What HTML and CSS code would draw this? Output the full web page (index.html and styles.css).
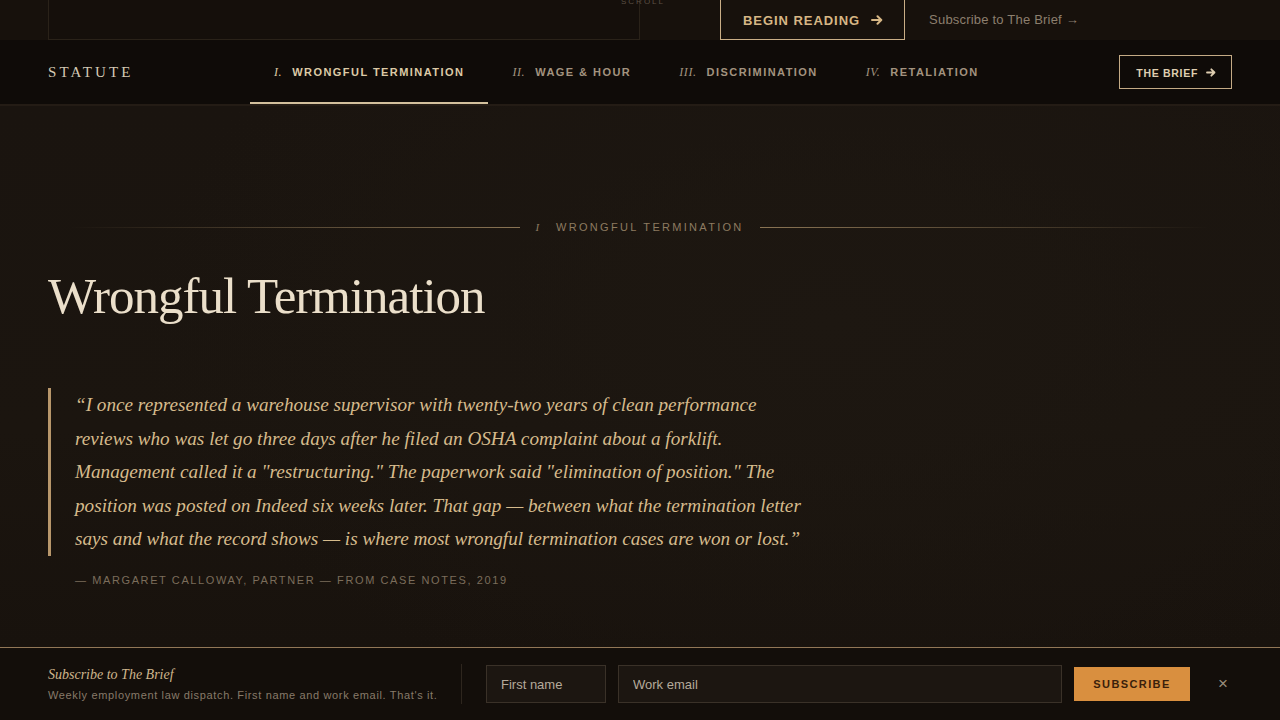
FILE: index.html
```html
<!DOCTYPE html>
<html lang="en">
<head>
<meta charset="utf-8">
<title>Statute</title>
<link rel="stylesheet" href="styles.css">
</head>
<body>
<div class="hero-tail">
  <div class="hero-box">
    <span class="scroll-cue">SCROLL</span>
  </div>
  <div class="hero-actions">
    <a class="btn-outline" href="#">BEGIN READING <svg class="arr" width="12" height="10" viewBox="0 0 12 10"><path d="M1 5h9M6.5 1.2 10.3 5 6.5 8.8" fill="none" stroke="currentColor" stroke-width="2" stroke-linecap="round" stroke-linejoin="round"/></svg></a>
    <a class="hero-link" href="#">Subscribe to The Brief &rarr;</a>
  </div>
</div>

<nav class="topnav">
  <div class="brand">STATUTE</div>
  <ul class="navlist">
    <li class="navitem active"><span class="num">I.</span>WRONGFUL TERMINATION</li>
    <li class="navitem"><span class="num">II.</span>WAGE &amp; HOUR</li>
    <li class="navitem"><span class="num">III.</span>DISCRIMINATION</li>
    <li class="navitem"><span class="num">IV.</span>RETALIATION</li>
  </ul>
  <a class="btn-brief" href="#">THE BRIEF <svg class="arr" width="10" height="9" viewBox="0 0 10 9"><path d="M1 4.5h7.5M5.3 1.3 8.5 4.5 5.3 7.7" fill="none" stroke="currentColor" stroke-width="1.8" stroke-linecap="round" stroke-linejoin="round"/></svg></a>
</nav>

<main class="main">
  <div class="section-label">
    <span class="rule rule-left"></span>
    <span class="label-num">I</span>
    <span class="label-text">WRONGFUL TERMINATION</span>
    <span class="rule rule-right"></span>
  </div>
  <h1 class="title">Wrongful Termination</h1>
  <blockquote class="quote">&ldquo;I once represented a warehouse supervisor with twenty-two years of clean performance reviews who was let go three days after he filed an OSHA complaint about a forklift. Management called it a "restructuring." The paperwork said "elimination of position." The position was posted on Indeed six weeks later. That gap &mdash; between what the termination letter says and what the record shows &mdash; is where most wrongful termination cases are won or lost.&rdquo;</blockquote>
  <p class="cite">&mdash; MARGARET CALLOWAY, PARTNER &mdash; FROM CASE NOTES, 2019</p>
</main>

<footer class="subbar">
  <div class="sub-copy">
    <div class="sub-title">Subscribe to The Brief</div>
    <div class="sub-desc">Weekly employment law dispatch. First name and work email. That's it.</div>
  </div>
  <div class="sub-divider"></div>
  <form class="sub-form">
    <input class="field field-name" type="text" placeholder="First name">
    <input class="field field-email" type="email" placeholder="Work email">
    <button class="btn-sub" type="button">SUBSCRIBE</button>
  </form>
  <button class="sub-close" type="button">&times;</button>
</footer>
</body>
</html>
```

FILE: styles.css
```css
* { box-sizing: border-box; }
html, body { margin: 0; padding: 0; }
body {
  width: 1280px;
  height: 720px;
  overflow: hidden;
  background: #18120d;
  font-family: "Liberation Sans", Arial, sans-serif;
  display: flex;
  flex-direction: column;
}
a { text-decoration: none; }

.hero-tail {
  height: 40px;
  background: #17110c;
  display: flex;
  align-items: flex-end;
  padding-left: 48px;
  overflow: hidden;
  flex-shrink: 0;
}
.hero-box {
  width: 592px;
  height: 80px;
  border: 1px solid #2a2219;
  border-top: none;
  position: relative;
  background: #150f0b;
}
.scroll-cue {
  position: absolute;
  right: -26px;
  top: 37px;
  font-size: 8px;
  letter-spacing: 2px;
  color: #5b5044;
}
.hero-actions {
  display: flex;
  align-items: flex-end;
  margin-left: 80px;
  gap: 24px;
}
.btn-outline {
  display: flex;
  align-items: center;
  gap: 11px;
  height: 42px;
  padding: 2px 21px 0 22px;
  border: 1px solid #c9ae86;
  color: #d6b685;
  font-weight: bold;
  font-size: 13px;
  letter-spacing: 0.95px;
}
.hero-link {
  color: #8c7f6e;
  font-size: 13px;
  letter-spacing: 0.2px;
  line-height: 40px;
}

.topnav {
  height: 66px;
  background: #0f0b08;
  border-bottom: 2px solid #241c15;
  display: flex;
  align-items: center;
  padding: 0 48px;
  flex-shrink: 0;
}
.brand {
  font-family: "Liberation Serif", "Times New Roman", serif;
  font-size: 15px;
  letter-spacing: 3.1px;
  color: #d4c9b4;
  width: 202px;
}
.navlist {
  list-style: none;
  margin: 0;
  padding: 0;
  display: flex;
  height: 100%;
  flex: 1;
}
.navitem {
  display: flex;
  align-items: center;
  height: 100%;
  padding: 2px 24px 0 24px;
  font-size: 11px;
  font-weight: bold;
  letter-spacing: 1.45px;
  color: #a3937f;
  border-bottom: 2px solid transparent;
}
.navitem.active {
  color: #dccaa6;
  border-bottom-color: #d3c09d;
}
.num {
  font-family: "Liberation Serif", "Times New Roman", serif;
  font-style: italic;
  font-weight: normal;
  font-size: 12px;
  margin-right: 10px;
  letter-spacing: 0.6px;
}
.btn-brief {
  display: flex;
  align-items: center;
  gap: 8px;
  height: 34px;
  padding: 1px 15px 0 16px;
  border: 1px solid #c4ab85;
  color: #dfceb0;
  font-size: 10.5px;
  font-weight: bold;
  letter-spacing: 0.7px;
}

.main {
  flex: 1;
  padding: 115px 48px 0 48px;
  background: radial-gradient(ellipse 700px 400px at 65% 40%, #1d1711 0%, rgba(29,23,17,0) 100%), linear-gradient(180deg, #1a140f 0%, #1b150f 60%, #18120d 100%);
}
.section-label {
  display: flex;
  align-items: center;
  padding: 0 22px;
  height: 12px;
}
.rule { height: 1px; flex: 1; }
.rule-left { background: linear-gradient(90deg, rgba(143,121,88,0) 0%, #8a7454 100%); }
.rule-right { background: linear-gradient(90deg, #8a7454 0%, rgba(143,121,88,0) 100%); }
.label-num {
  font-family: "Liberation Serif", "Times New Roman", serif;
  font-style: italic;
  font-size: 11px;
  color: #8d7b60;
  margin: 0 17px 0 15px;
}
.label-text {
  font-size: 11px;
  letter-spacing: 2.3px;
  color: #8d7b60;
  margin-right: 16px;
}
.title {
  font-family: "Liberation Serif", "Times New Roman", serif;
  font-weight: normal;
  font-size: 51px;
  letter-spacing: -1px;
  color: #ebdfca;
  margin: 30px 0 0 0;
  line-height: 66px;
}
.quote {
  margin: 59px 0 0 0;
  border-left: 3px solid #b8976b;
  padding: 0 0 0 24px;
  width: 762px;
  font-family: "Liberation Serif", "Times New Roman", serif;
  font-style: italic;
  font-size: 19.2px;
  line-height: 33.5px;
  color: #d6bb8c;
}
.cite {
  margin: 18px 0 0 27px;
  font-size: 11px;
  letter-spacing: 1.6px;
  color: #7b6d5b;
}

.subbar {
  height: 73px;
  flex-shrink: 0;
  border-top: 1px solid #927757;
  background: #130e0a;
  display: flex;
  align-items: center;
  padding: 0 48px;
}
.sub-copy { width: 413px; }
.sub-title {
  font-family: "Liberation Serif", "Times New Roman", serif;
  font-style: italic;
  font-size: 14px;
  color: #cfb68d;
  margin-bottom: 6px;
}
.sub-desc {
  font-size: 11px;
  letter-spacing: 0.65px;
  color: #877a69;
}
.sub-divider {
  width: 1px;
  height: 40px;
  background: #2e261e;
  margin-right: 24px;
}
.sub-form {
  display: flex;
  align-items: center;
  gap: 12px;
  margin: 0;
}
.field {
  height: 38px;
  background: #1c1611;
  border: 1px solid #3a3128;
  color: #cbbfae;
  font-family: "Liberation Sans", Arial, sans-serif;
  font-size: 13px;
  padding: 0 14px;
  outline: none;
}
.field::placeholder { color: #b5aa9a; }
.field-name { width: 120px; }
.field-email { width: 444px; }
.btn-sub {
  height: 34px;
  width: 116px;
  background: #d98f3f;
  border: none;
  color: #3b1f0b;
  font-family: "Liberation Sans", Arial, sans-serif;
  font-weight: bold;
  font-size: 11px;
  letter-spacing: 1.4px;
}
.sub-close {
  margin-left: 28px;
  background: none;
  border: none;
  color: #9a8d7c;
  font-size: 17px;
  padding: 0;
  font-family: "Liberation Sans", Arial, sans-serif;
}
```
